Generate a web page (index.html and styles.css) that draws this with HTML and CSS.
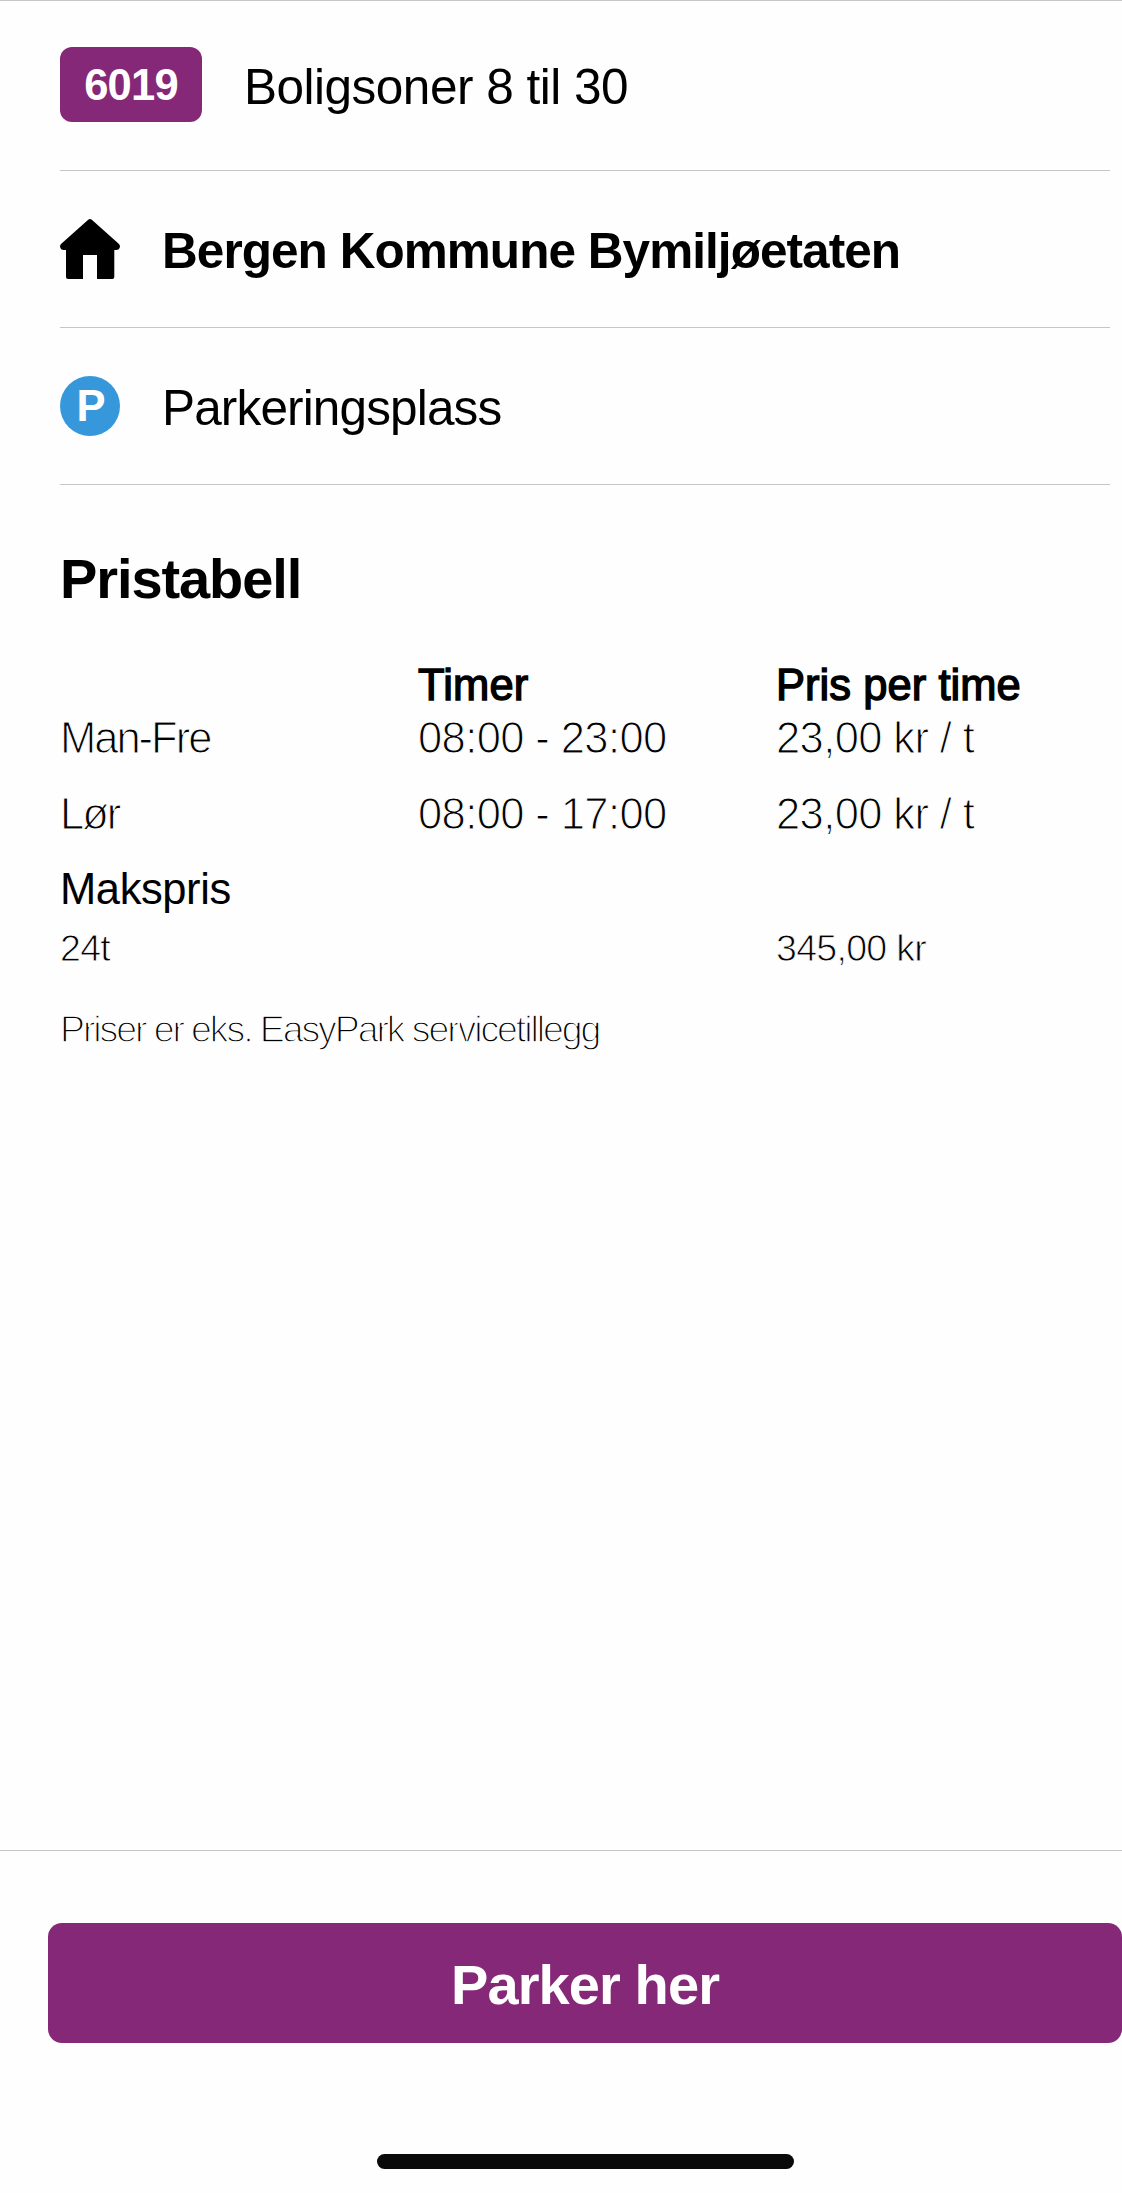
FILE: index.html
```html
<!DOCTYPE html>
<html lang="no">

<head>
    <meta charset="UTF-8">
    <meta name="viewport" content="width=device-width">
    <title>Boligsoner 8 til 30</title>
    <link rel="stylesheet" href="styles.css">
</head>

<body>
    <main class="content">
        <div class="row row-zone">
            <span class="badge">6019</span>
            <span class="label zone-name">Boligsoner 8 til 30</span>
        </div>
        <div class="row">
            <svg class="icon" viewBox="0 0 60 60">
                <path d="M28.2 .8Q30-.7 31.8 .8L59 25Q60 26 60 27.5Q59.500 31 56 31H54.300V58Q54.300 60 52.300 60H37V36H23V60H8Q6 60 6 58V31H4Q.5 31 0 27.500Q0 26 1 25Z" />
            </svg>
            <span class="label owner">Bergen Kommune Bymiljøetaten</span>
        </div>
        <div class="row">
            <span class="icon parking">P</span>
            <span class="label">Parkeringsplass</span>
        </div>

        <section class="prices">
            <h2>Pristabell</h2>
            <div class="line head">
                <span></span>
                <span class="timer">Timer</span>
                <span>Pris per time</span>
            </div>
            <div class="line">
                <span class="day">Man-Fre</span>
                <span>08:00 - 23:00</span>
                <span>23,00 kr / t</span>
            </div>
            <div class="line">
                <span class="day">Lør</span>
                <span>08:00 - 17:00</span>
                <span>23,00 kr / t</span>
            </div>
            <h3>Makspris</h3>
            <div class="line max">
                <span>24t</span>
                <span></span>
                <span>345,00 kr</span>
            </div>
            <p class="note">Priser er eks. EasyPark servicetillegg</p>
        </section>
    </main>

    <footer class="footer">
        <button class="park-btn">Parker her</button>
        <div class="home-bar"></div>
    </footer>
</body>

</html>
```
FILE: styles.css
```css
* {
    margin: 0;
    padding: 0;
    box-sizing: border-box;
}
body {
    display: flex;
    flex-direction: column;
    height: 2193px;
    overflow: hidden;
    background: #fefefe;
    border-top: 1px solid #c6c6c6;
    color: #000;
    font-family: "Helvetica Neue", "Liberation Sans", Arial, sans-serif;
}
.content {
    flex: 1;
    padding-left: 60px;
}
.row {
    display: flex;
    align-items: center;
    gap: 40px;
    height: 157px;
    margin-right: 12px;
    border-bottom: 1px solid #c6c6c6;
}
.row-zone {
    height: 170px;
    padding-bottom: 2px;
}
.badge {
    width: 142px;
    height: 75px;
    padding-top: 1px;
    border-radius: 12px;
    background: #862878;
    color: #fff;
    font-size: 43.5px;
    font-weight: bold;
    line-height: 75px;
    letter-spacing: -0.8px;
    text-align: center;
}
.label {
    padding: 3px 0 0 2px;
    font-size: 49.5px;
    line-height: 60px;
    letter-spacing: -0.85px;
}
.zone-name {
    padding-top: 4px;
    letter-spacing: -0.5px;
}
.owner {
    letter-spacing: -0.95px;
    font-weight: bold;
}
.icon {
    width: 60px;
    height: 60px;
}
.parking {
    padding-left: 2px;
    border-radius: 50%;
    background: #3698db;
    color: #fff;
    font-size: 43.5px;
    font-weight: bold;
    line-height: 60px;
    text-align: center;
}
.prices {
    padding-top: 64px;
}
h2 {
    margin-bottom: 52px;
    font-size: 56px;
    line-height: 60px;
    letter-spacing: -1.1px;
}
.line {
    display: grid;
    grid-template-columns: 358px 358px 1fr;
    height: 76px;
    font-size: 43.5px;
    line-height: 48px;
    letter-spacing: -0.6px;
    /* background coloured stroke makes the regular cut look light */
    -webkit-text-stroke: 1.1px #fefefe;
}
.head {
    height: 53px;
    letter-spacing: 0.05px;
    -webkit-text-stroke: 1.4px #000;
}
.timer {
    letter-spacing: 0.2px;
}
.day {
    letter-spacing: -2px;
}
h3 {
    height: 62px;
    margin-top: -1px;
    font-size: 43.5px;
    font-weight: normal;
    line-height: 48px;
    letter-spacing: -0.4px;
}
.max {
    height: 81px;
    font-size: 37.5px;
    line-height: 42px;
    letter-spacing: -0.7px;
    -webkit-text-stroke: 0.9px #fefefe;
}
.note {
    font-size: 37.5px;
    line-height: 42px;
    letter-spacing: -2.1px;
    -webkit-text-stroke: 1.4px #fefefe;
}
.footer {
    height: 343px;
    padding: 72px 0 0 48px;
    border-top: 1px solid #c6c6c6;
}
.park-btn {
    display: block;
    width: 100%;
    height: 120px;
    padding: 3px 0 0;
    border: none;
    border-radius: 14px;
    background: #862878;
    color: #fff;
    font-family: inherit;
    font-size: 56px;
    font-weight: bold;
    letter-spacing: -0.9px;
}
.home-bar {
    width: 417px;
    height: 15px;
    margin: 111px 0 0 329px;
    border-radius: 8px;
    background: #0a0a0a;
}
```
